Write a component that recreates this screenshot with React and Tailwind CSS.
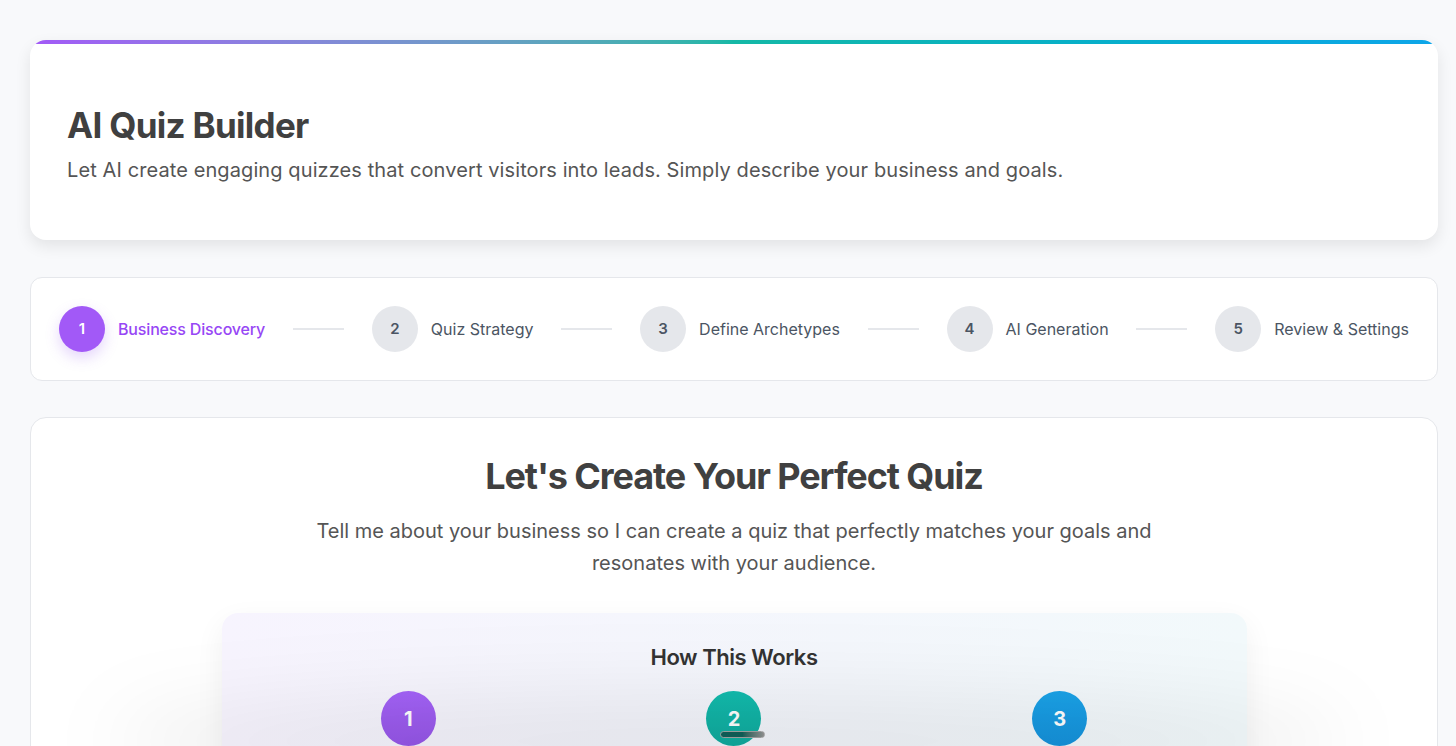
const steps = [
  { n: 1, label: 'Business Discovery', active: true },
  { n: 2, label: 'Quiz Strategy' },
  { n: 3, label: 'Define Archetypes' },
  { n: 4, label: 'AI Generation' },
  { n: 5, label: 'Review & Settings' },
];

const how = [
  { n: 1, color: 'bg-gradient-to-b from-[#a463f8] to-[#9656e8]' },
  { n: 2, color: 'bg-gradient-to-b from-[#12bcae] to-[#10ab9e]' },
  { n: 3, color: 'bg-gradient-to-b from-[#1aa3e8] to-[#1692dc]' },
];

function Stepper() {
  return (
    <div className="mt-[37px] rounded-xl border border-gray-200 bg-white px-7 py-[28px]">
      <div className="flex items-center justify-between">
        {steps.map((s, i) => (
          <div key={s.n} className="contents">
            <div className="flex items-center gap-[13px]">
              <div
                className={
                  s.active
                    ? 'flex h-[46px] w-[46px] items-center justify-center rounded-full bg-[#a259f7] text-[15px] font-semibold text-white shadow-[0_6px_14px_rgba(150,90,240,0.25)]'
                    : 'flex h-[46px] w-[46px] items-center justify-center rounded-full bg-[#e5e7eb] text-[15px] font-semibold text-[#4b5563]'
                }
              >
                {s.n}
              </div>
              <span
                className={
                  s.active
                    ? 'text-[16px] font-medium tracking-[-0.01em] text-[#9747f5]'
                    : 'text-[16px] text-[#4b5563]'
                }
              >
                {s.label}
              </span>
            </div>
            {i < steps.length - 1 && <div className="h-[2px] w-[51px] bg-[#e5e7eb]" />}
          </div>
        ))}
      </div>
    </div>
  );
}

export default function App() {
  return (
    <div
      className="min-h-screen bg-[#f8f9fb] pl-[30px] pr-[18px] pt-[40px] pb-10"
      style={{ fontFamily: 'Inter, "Noto Sans", sans-serif' }}
    >
      {/* header card */}
      <div className="overflow-hidden rounded-2xl bg-white shadow-[0_6px_16px_rgba(0,0,0,0.09)]">
        <div className="h-[4px] bg-gradient-to-r from-[#a259f7] via-[#14b8a6] to-[#0ea5e9]" />
        <div className="px-[37px] pt-[61px] pb-[56px]">
          <h1 className="text-[35px] font-bold leading-[40px] tracking-[-0.02em] text-[#404040]">
            AI Quiz Builder
          </h1>
          <p className="mt-[11px] text-[20px] leading-[28px] tracking-[0.005em] text-[#555555]">
            Let AI create engaging quizzes that convert visitors into leads. Simply describe your business and goals.
          </p>
        </div>
      </div>

      <Stepper />

      {/* main card */}
      <div className="mt-[36px] rounded-2xl border border-gray-200 bg-white pt-[38px] pb-10">
        <h2 className="text-center text-[36px] font-bold leading-[40px] tracking-[-0.03em] text-[#404040]">
          Let's Create Your Perfect Quiz
        </h2>
        <p className="mx-auto mt-[19px] max-w-[880px] text-center text-[20px] leading-[32px] tracking-[0] text-[#555555]">
          Tell me about your business so I can create a quiz that perfectly matches your goals and resonates with your audience.
        </p>

        <div className="mx-auto mt-[34px] max-w-[1025px] rounded-2xl bg-gradient-to-r from-[#f7f4fe] to-[#f2f9fb] px-6 pt-[30px] pb-10 shadow-[0_10px_30px_rgba(0,0,0,0.06)]">
          <h3 className="text-center text-[22px] font-semibold leading-[28px] tracking-[-0.02em] text-[#333333]">
            How This Works
          </h3>
          <div className="mt-5 grid grid-cols-3">
            {how.map((h) => (
              <div key={h.n} className="flex flex-col items-center">
                <div
                  className={`flex h-[55px] w-[55px] items-center justify-center rounded-full text-[20px] font-bold text-white ${h.color}`}
                >
                  {h.n}
                </div>
              </div>
            ))}
          </div>
        </div>
      </div>

      {/* floating overlay shadow at the bottom edge */}
      <div className="pointer-events-none fixed bottom-[-40px] left-[110px] right-[110px] h-[90px] rounded-[50%] bg-black/[0.08] blur-2xl" />
      <div className="pointer-events-none fixed left-[720px] top-[731px] h-[7px] w-[45px] rounded-full border border-[#9a9a9a] bg-gradient-to-r from-[#0f5a54] via-[#0f5a54] to-[#8c8c8c]" />
    </div>
  );
}
